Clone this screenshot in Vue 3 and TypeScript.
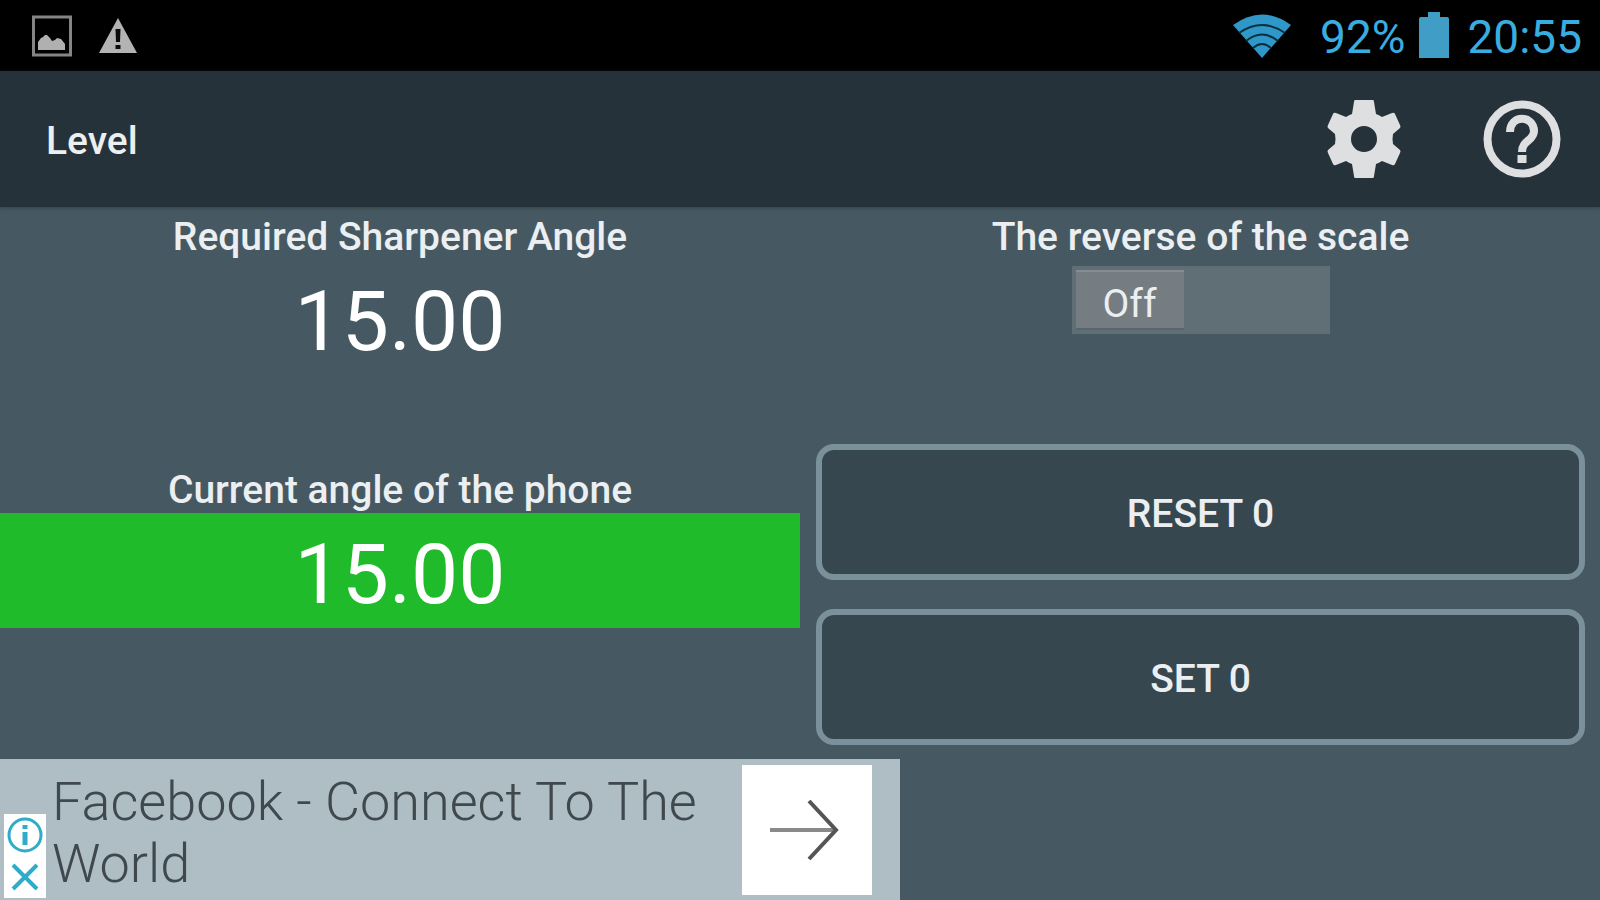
<script setup lang="ts">
import { ref } from 'vue'

const requiredAngle = ref(15)
const currentAngle = ref(15)
const offset = ref(0)
const reversed = ref(false)

const format = (value: number): string => value.toFixed(2)

function setZero(): void {
  offset.value += currentAngle.value
  currentAngle.value = 0
}

function resetZero(): void {
  currentAngle.value += offset.value
  offset.value = 0
}
</script>

<template>
  <div class="screen">
    <div class="status">
      <div class="notices">
        <svg width="40" height="42" viewBox="0 0 40 42" aria-hidden="true">
          <rect x="1.5" y="2" width="37" height="38" fill="none" stroke="#858585" stroke-width="3" />
          <path d="M6 35V27L9 23L11 22L13 20L15 20L18 23L20 26L23 25L25 23L29 24L33 29V35Z" fill="#b0b0b0" />
        </svg>
        <svg width="40" height="36" viewBox="0 0 40 36" aria-hidden="true">
          <path d="M20 0L39 35H1Z" fill="#b3b3b3" />
          <path d="M17.500 11H22.500L22 24H18ZM17.500 27H22.500V31H17.500Z" fill="#0b0b0b" />
        </svg>
      </div>
      <div class="system">
        <svg class="wifi" width="60" height="44" viewBox="0 0 60 44" aria-hidden="true">
          <path d="M1 11Q30 -10 59 11L30 44Z" fill="#2f98c8" />
          <g fill="none" stroke="#0a3040" stroke-width="2">
            <path d="M7 19Q30 3 53 19" />
            <path d="M14 27Q30 14 46 27" />
            <path d="M21 34Q30 26 39 34" />
          </g>
        </svg>
        <span>92%</span>
        <svg class="battery" width="30" height="46" viewBox="0 0 30 46" aria-hidden="true">
          <path d="M9 0H21V5H28Q30 5 30 7V46H0V7Q0 5 2 5H9Z" fill="#409dc6" />
        </svg>
        <span>20:55</span>
      </div>
    </div>

    <header class="bar">
      <h1>Level</h1>
      <div class="actions">
        <button type="button" aria-label="Settings">
          <svg width="78" height="78" viewBox="0 0 78 78" aria-hidden="true">
            <path
              fill="#dedfe0"
              fill-rule="evenodd"
              d="M30 0H48Q49 0 49 2L51 14Q54 15 57 17L67 13Q69 12 70 14L75 25Q76 27 75 28L68 34Q67 39 68 44L75 50Q76 51 75 53L70 64Q69 66 67 65L57 61Q54 63 51 64L49 76Q49 78 48 78H30Q29 78 29 76L27 64Q24 63 21 61L11 65Q9 66 8 64L3 53Q2 51 3 50L10 44Q11 39 10 34L3 28Q2 27 3 25L8 14Q9 12 11 13L21 17Q24 15 27 14L29 2Q29 0 30 0ZM39 26A13 13 0 1 0 39 52A13 13 0 1 0 39 26Z"
            />
          </svg>
        </button>
        <button type="button" aria-label="Help">
          <svg width="78" height="78" viewBox="0 0 78 78" fill="none" stroke="#dedfe0" aria-hidden="true">
            <circle cx="39" cy="39" r="34.500" stroke-width="8" />
            <path d="M27 32C27 14 51 15 51 31C51 41 39 40 39 52" stroke-width="8" />
            <path d="M39 55V63" stroke-width="9" />
          </svg>
        </button>
      </div>
    </header>

    <main class="content">
      <section class="angles">
        <div class="reading">
          <h2>Required Sharpener Angle</h2>
          <output>{{ format(requiredAngle) }}</output>
        </div>
        <div class="reading">
          <h2>Current angle of the phone</h2>
          <output class="match">{{ format(currentAngle) }}</output>
        </div>
      </section>

      <section class="controls">
        <div class="reverse">
          <label for="reverse">The reverse of the scale</label>
          <div class="switch">
            <input id="reverse" v-model="reversed" type="checkbox" role="switch" />
            <span class="thumb" :class="{ on: reversed }">{{ reversed ? 'On' : 'Off' }}</span>
          </div>
        </div>
        <div class="zeroing">
          <button type="button" @click="resetZero">RESET 0</button>
          <button type="button" @click="setZero">SET 0</button>
        </div>
      </section>
    </main>

    <aside class="ad">
      <div class="choices">
        <button type="button" aria-label="About this ad">
          <svg width="36" height="36" viewBox="0 0 36 36" fill="none" stroke="#2eacc8" aria-hidden="true">
            <circle cx="18" cy="18" r="16" stroke-width="3" />
            <path d="M18 15V28M18 8V12" stroke-width="5" />
          </svg>
        </button>
        <button type="button" aria-label="Close ad">
          <svg width="36" height="36" viewBox="0 0 36 36" fill="none" stroke="#2eacc8" stroke-width="4" aria-hidden="true">
            <path d="M6 6L30 30M30 6L6 30" />
          </svg>
        </button>
      </div>
      <a class="ad-title" href="#">Facebook - Connect To The World</a>
      <a class="go" href="#" aria-label="Open ad">
        <svg width="74" height="60" viewBox="0 0 74 60" fill="none" aria-hidden="true">
          <path d="M0 30H66" stroke="#8a8a8a" stroke-width="4" />
          <path d="M39 1L66 30L39 59" stroke="#555" stroke-width="4" />
        </svg>
      </a>
    </aside>
  </div>
</template>

<style>
body {
  margin: 0;
  background: #465962;
}
</style>

<style scoped>
.screen {
  display: flex;
  flex-direction: column;
  min-height: 100vh;
  background: #465962;
  color: #eceff1;
  font-family: Roboto, "Liberation Sans", sans-serif;
  font-size: 39px;
}

button {
  padding: 0;
  border: 0;
  background: none;
  color: inherit;
  font: inherit;
  cursor: pointer;
}

svg {
  display: block;
}

.status {
  display: flex;
  align-items: center;
  justify-content: space-between;
  height: 71px;
  padding: 0 18px 0 32px;
  background: #000;
}

.notices {
  display: flex;
  align-items: center;
  gap: 26px;
}

.system {
  display: flex;
  align-items: center;
  color: #39ade0;
  font-size: 46px;
  line-height: 68px;
}

.system span {
  padding-top: 3px;
}

.wifi {
  margin-right: 28px;
}

.battery {
  margin: 0 18px 2px 14px;
}

.bar {
  display: flex;
  align-items: center;
  justify-content: space-between;
  height: 136px;
  padding: 0 39px 0 46px;
  background: #263239;
  box-shadow: 0 1px 4px #26323999;
}

h1 {
  margin: 0;
  padding-top: 3px;
  font-size: 39px;
  font-weight: 500;
}

.actions {
  display: flex;
  gap: 80px;
}

.content {
  display: grid;
  grid-template-columns: 1fr 1fr;
  flex: 1;
}

.angles {
  display: flex;
  flex-direction: column;
  gap: 91px;
  padding-top: 6px;
}

.reading {
  display: flex;
  flex-direction: column;
  text-align: center;
}

h2,
.reverse label {
  margin: 0;
  padding-top: 2px;
  font-size: 39px;
  font-weight: 500;
  line-height: 45px;
}

output {
  padding-top: 8px;
  color: #fff;
  font-size: 84px;
  line-height: 107px;
}

.match {
  background: #1fbb2b;
}

.controls {
  display: flex;
  flex-direction: column;
  justify-content: space-between;
  padding: 6px 15px 14px 16px;
}

.reverse {
  display: flex;
  flex-direction: column;
  align-items: center;
  gap: 6px;
}

.switch {
  display: grid;
  width: 258px;
  height: 68px;
}

.switch > * {
  grid-area: 1 / 1;
}

.switch input {
  width: 100%;
  height: 100%;
  margin: 0;
  appearance: none;
  background: #606e75;
  cursor: pointer;
}

.thumb {
  width: 108px;
  height: 60px;
  margin: 4px;
  box-sizing: border-box;
  border-top: 2px solid #868d92;
  border-bottom: 2px solid #59646b;
  background: #757d83;
  line-height: 64px;
  text-align: center;
  pointer-events: none;
  z-index: 1;
}

.thumb.on {
  justify-self: end;
}

.zeroing {
  display: flex;
  flex-direction: column;
  gap: 29px;
}

.zeroing button {
  height: 136px;
  padding-top: 4px;
  border: 6px solid #7a919c;
  border-radius: 18px;
  background: #37474f;
  font-weight: 500;
}

.ad {
  display: flex;
  align-items: flex-start;
  width: 900px;
  max-width: 100%;
  box-sizing: border-box;
  height: 141px;
  padding: 0 28px 0 4px;
  background: #afbec5;
  color: #3e484d;
}

.choices {
  display: flex;
  flex-direction: column;
  align-self: flex-end;
  align-items: center;
  gap: 6px;
  width: 42px;
  margin-bottom: 2px;
  padding: 3px 0;
  background: #fff;
}

.ad-title {
  flex: 1;
  padding: 12px 20px 0 6px;
  color: inherit;
  font-size: 54px;
  font-weight: 300;
  line-height: 62px;
  text-decoration: none;
}

.go {
  display: grid;
  place-items: center;
  align-self: center;
  width: 130px;
  height: 130px;
  background: #fff;
}
</style>
